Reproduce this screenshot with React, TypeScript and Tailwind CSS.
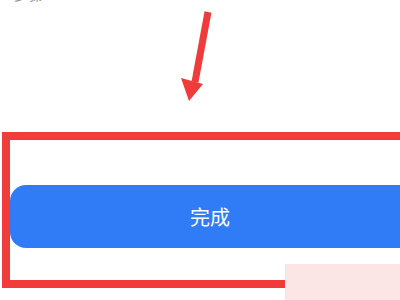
export default function App() {
  return (
    <div className="relative h-[300px] w-[400px] overflow-hidden bg-white font-['Noto_Sans_CJK_SC','Noto_Sans',sans-serif]">
      {/* caption that the crop cuts off at the very top */}
      <div className="absolute left-[14px] top-[-15px] text-[14px] leading-[18px] text-[#8a8a8a]">步骤</div>

      {/* annotation arrow */}
      <svg className="absolute left-0 top-0" width="400" height="120" viewBox="0 0 400 120">
        <line x1="208" y1="12" x2="195" y2="82" stroke="#f03b3b" strokeWidth="7" />
        <polygon points="181,78 203,84 189,101" fill="#f03b3b" />
      </svg>

      {/* highlighted area */}
      <div className="ml-[2px] mt-[132px] w-[420px] border-[8px] border-[#f23b3b] pb-[32px] pt-[45px]">
        <button className="flex h-[63px] w-[400px] items-center justify-center rounded-l-[16px] bg-[#2f7cf6] text-[20px] text-white">
          完成
        </button>
      </div>

      {/* faint pink patch over the corner */}
      <div className="absolute left-[285px] top-[264px] h-[36px] w-[115px] bg-[#fbe5e5]" />
    </div>
  );
}
